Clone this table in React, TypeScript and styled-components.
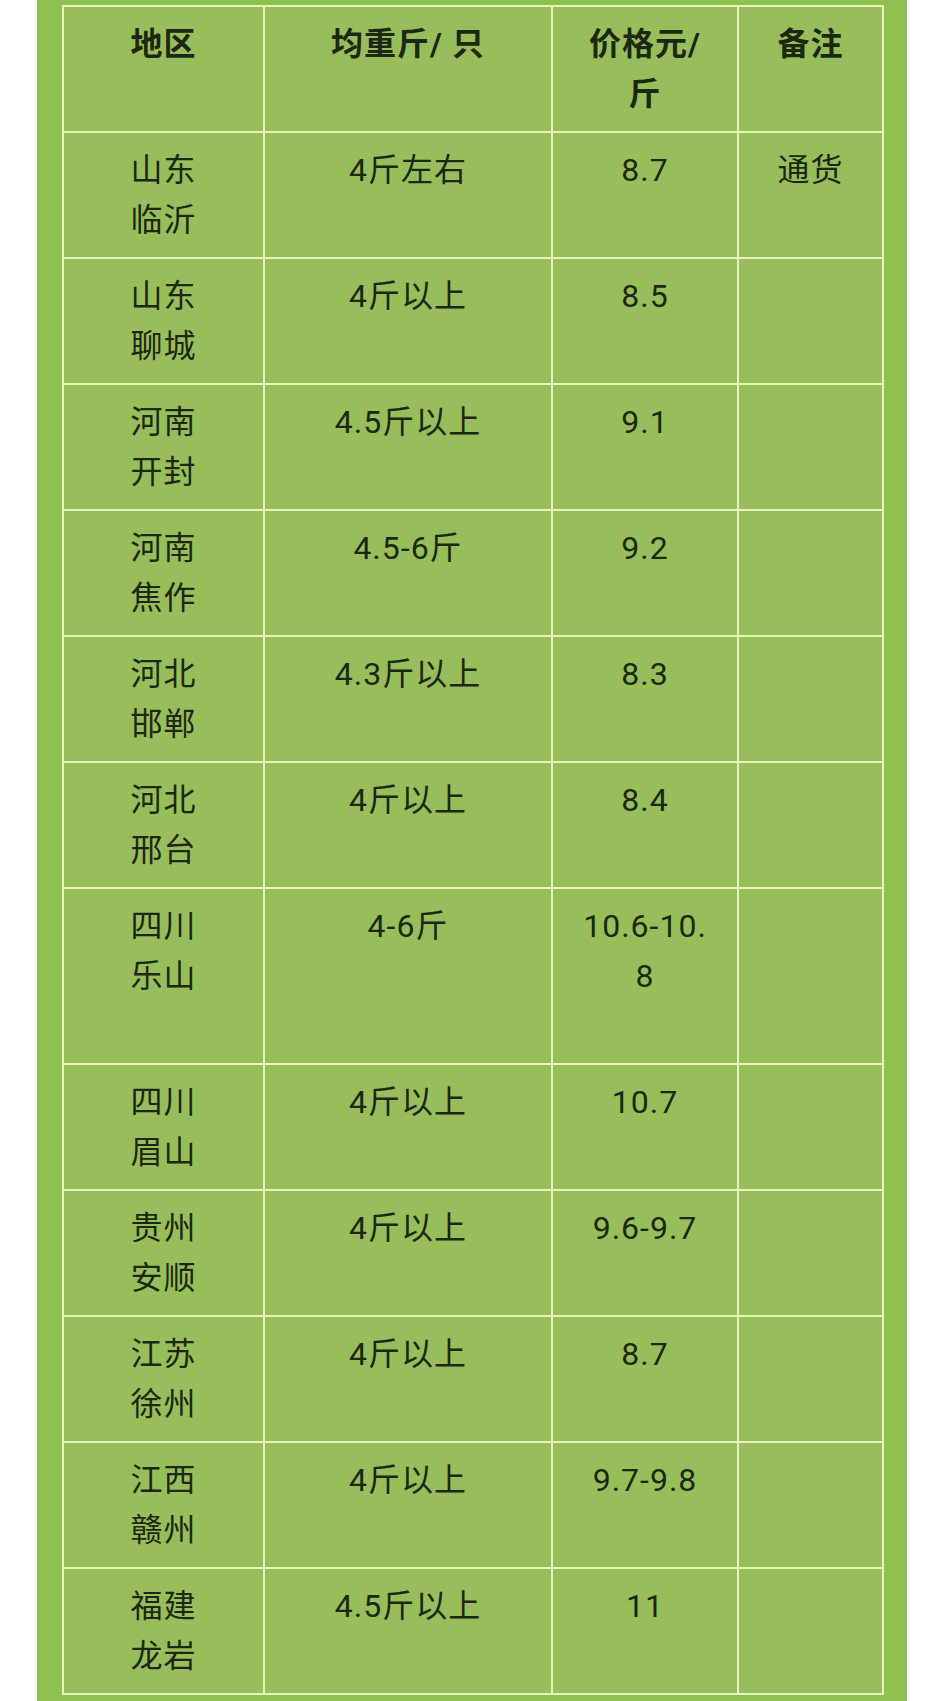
import React from "react";
import styled, { createGlobalStyle } from "styled-components";

const GlobalStyle = createGlobalStyle`
  html, body {
    margin: 0;
    padding: 0;
    background: #ffffff;
  }
  body {
    font-family: Roboto, "Noto Sans CJK SC", sans-serif;
  }
`;

const Page = styled.div`
  width: 945px;
  min-height: 1701px;
  background: #ffffff;
  padding: 0 38px 0 37px;
  box-sizing: border-box;
`;

const Panel = styled.section`
  background: #8ec150;
  padding: 5px 23px 20px 25px;
  min-height: 1701px;
  box-sizing: border-box;
`;

const PriceTable = styled.table`
  width: 820px;
  border-collapse: collapse;
  table-layout: fixed;
  background: #98be5c;
  color: #1c2812;
  font-size: 32px;
  line-height: 50px;
  letter-spacing: 1px;
`;

const HeadCell = styled.th`
  border: 2px solid #e6f3ba;
  padding: 12px 10px;
  height: 100px;
  vertical-align: top;
  text-align: center;
  font-weight: 700;
`;

const Cell = styled.td<{ $tall?: boolean }>`
  border: 2px solid #e6f3ba;
  padding: 12px 10px ${(p) => (p.$tall ? "62px" : "12px")};
  height: 100px;
  vertical-align: top;
  text-align: center;
  font-weight: 400;
`;

type Row = {
  region: [string, string];
  weight: string;
  price: React.ReactNode;
  note?: string;
  tall?: boolean;
};

const ROWS: Row[] = [
  { region: ["山东", "临沂"], weight: "4斤左右", price: "8.7", note: "通货" },
  { region: ["山东", "聊城"], weight: "4斤以上", price: "8.5" },
  { region: ["河南", "开封"], weight: "4.5斤以上", price: "9.1" },
  { region: ["河南", "焦作"], weight: "4.5-6斤", price: "9.2" },
  { region: ["河北", "邯郸"], weight: "4.3斤以上", price: "8.3" },
  { region: ["河北", "邢台"], weight: "4斤以上", price: "8.4" },
  {
    region: ["四川", "乐山"],
    weight: "4-6斤",
    price: (
      <>
        10.6-10.
        <br />8
      </>
    ),
    tall: true,
  },
  { region: ["四川", "眉山"], weight: "4斤以上", price: "10.7" },
  { region: ["贵州", "安顺"], weight: "4斤以上", price: "9.6-9.7" },
  { region: ["江苏", "徐州"], weight: "4斤以上", price: "8.7" },
  { region: ["江西", "赣州"], weight: "4斤以上", price: "9.7-9.8" },
  { region: ["福建", "龙岩"], weight: "4.5斤以上", price: "11" },
];

const App = () => {
  return (
    <>
      <GlobalStyle />
      <Page>
        <Panel>
          <PriceTable>
            <colgroup>
              <col style={{ width: 201 }} />
              <col style={{ width: 288 }} />
              <col style={{ width: 186 }} />
              <col style={{ width: 145 }} />
            </colgroup>
            <thead>
              <tr>
                <HeadCell>地区</HeadCell>
                <HeadCell>均重斤/ 只</HeadCell>
                <HeadCell>
                  价格元/
                  <br />斤
                </HeadCell>
                <HeadCell>备注</HeadCell>
              </tr>
            </thead>
            <tbody>
              {ROWS.map((row, index) => (
                <tr key={index}>
                  <Cell $tall={row.tall}>
                    {row.region[0]}
                    <br />
                    {row.region[1]}
                  </Cell>
                  <Cell $tall={row.tall}>{row.weight}</Cell>
                  <Cell $tall={row.tall}>{row.price}</Cell>
                  <Cell $tall={row.tall}>{row.note}</Cell>
                </tr>
              ))}
            </tbody>
          </PriceTable>
        </Panel>
      </Page>
    </>
  );
};

export default App;
